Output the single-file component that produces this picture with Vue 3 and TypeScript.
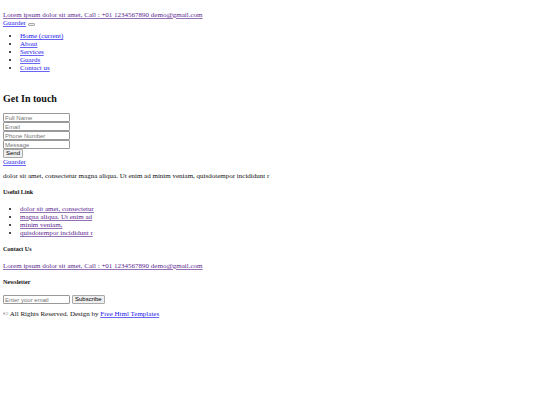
<script setup lang="ts">
import { ref } from 'vue'

interface NavItem {
  label: string
  href: string
}

const navItems: NavItem[] = [
  { label: 'Home (current)', href: '#home' },
  { label: 'About', href: '#about' },
  { label: 'Services', href: '#services' },
  { label: 'Guards', href: '#guards' },
  { label: 'Contact us', href: '#contact' },
]

const usefulLinks: string[] = [
  'dolor sit amet, consectetur',
  'magna aliqua. Ut enim ad',
  'minim veniam,',
  'quisdotempor incididunt r',
]

const contactFields = ref([
  { label: 'Full Name', type: 'text', value: '' },
  { label: 'Email', type: 'email', value: '' },
  { label: 'Phone Number', type: 'text', value: '' },
  { label: 'Message', type: 'text', value: '' },
])

const newsletterEmail = ref('')
</script>

<template>
  <div class="page">
    <header>
      <div class="contact-line">
        <a class="visited" href="#">Lorem ipsum dolor sit amet, Call : +01 1234567890 demo@gmail.com</a>
      </div>
      <nav>
        <div class="brand-row">
          <a href="#home">Guarder</a>
          <button class="toggler" type="button" aria-label="Toggle navigation"></button>
        </div>
        <ul>
          <li v-for="item in navItems" :key="item.label">
            <a :href="item.href">{{ item.label }}</a>
          </li>
        </ul>
      </nav>
    </header>

    <main id="contact">
      <h2>Get In touch</h2>
      <form class="contact-form" @submit.prevent>
        <input
          v-for="field in contactFields"
          :key="field.label"
          v-model="field.value"
          :type="field.type"
          :placeholder="field.label"
          :aria-label="field.label"
        />
        <button type="submit">Send</button>
      </form>
    </main>

    <footer>
      <a href="#home">Guarder</a>
      <p class="intro">
        dolor sit amet, consectetur magna aliqua. Ut enim ad minim veniam, quisdotempor incididunt r
      </p>
      <h5>Useful Link</h5>
      <ul>
        <li v-for="link in usefulLinks" :key="link">
          <a class="visited" href="#">{{ link }}</a>
        </li>
      </ul>
      <h5>Contact Us</h5>
      <div class="contact-line">
        <a class="visited" href="#">Lorem ipsum dolor sit amet, Call : +01 1234567890 demo@gmail.com</a>
      </div>
      <h5>Newsletter</h5>
      <form class="newsletter" @submit.prevent>
        <input
          v-model="newsletterEmail"
          type="email"
          placeholder="Enter your email"
          aria-label="Enter your email"
        />
        <button type="submit">Subscribe</button>
      </form>
      <p class="copyright">
        © All Rights Reserved. Design by <a href="#templates">Free Html Templates</a>
      </p>
    </footer>
  </div>
</template>

<style>
body {
  margin: 0;
  background: #fff;
}
</style>

<style scoped>
.page {
  padding: 11px 3px 8px;
  color: #111;
  font-family: "Liberation Serif", "Times New Roman", serif;
  font-size: 7px;
  line-height: 8px;
}

a {
  color: #1a1aee;
  text-decoration-color: #6666f3;
}

a.visited {
  color: #5d278f;
  text-decoration-color: #9470b5;
}

.brand-row {
  display: flex;
  align-items: center;
  gap: 2px;
}

ul {
  margin: 5px 0 8px;
  padding-left: 17px;
}

header ul {
  margin-bottom: 21px;
}

h2 {
  margin: 0 0 8px;
  font-size: 10px;
  line-height: 12px;
}

h5 {
  margin: 8px 0 9px;
  font-size: 6px;
  line-height: 8px;
}

p {
  margin: 6px 0;
}

.contact-form {
  display: flex;
  flex-direction: column;
  align-items: flex-start;
}

.newsletter {
  display: flex;
  gap: 2px;
}

input,
button {
  box-sizing: border-box;
  height: 9px;
  margin: 0;
  border: 1px solid #999;
  font-family: "Liberation Sans", Arial, sans-serif;
  font-size: 6px;
  line-height: 7px;
}

input {
  width: 67px;
  padding: 0 1px;
  border-radius: 1px;
  background: #fff;
  color: #000;
}

input::placeholder {
  color: #757575;
}

button {
  padding: 0 2px;
  border-color: #aaa;
  border-radius: 1px;
  background: #efefef;
  color: #000;
}

.toggler {
  width: 7px;
  height: 3px;
  margin-top: 2px;
  padding: 0;
}
</style>
